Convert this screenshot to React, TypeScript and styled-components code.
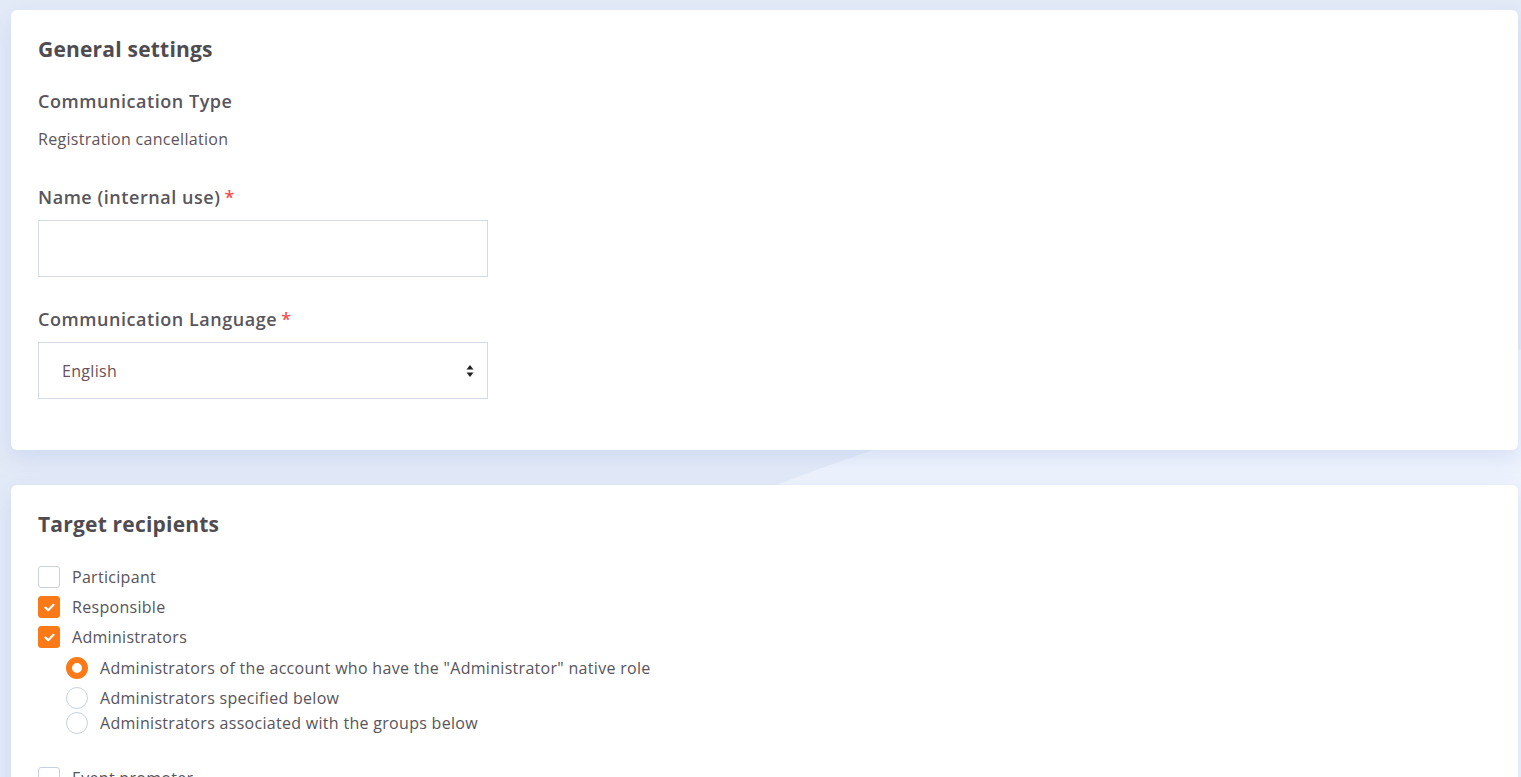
import React, { FC } from 'react';
import styled, { createGlobalStyle } from 'styled-components';

const GlobalStyle = createGlobalStyle`
  * {
    margin: 0;
    box-sizing: border-box;
  }
  body {
    font-family: "Open Sans", Lato, sans-serif;
    letter-spacing: 0.3px;
    background-color: #e3eaf7;
    background-image: radial-gradient(circle at 1500px 2350px, #eef3fd 0, #eef3fd 2000px, #e3eaf7 2001px);
    min-height: 100vh;
  }
`;

const Page = styled.div`
  padding: 10px 3px 0 11px;
  display: flex;
  flex-direction: column;
  gap: 35px;
`;

const Card = styled.section`
  background: #fff;
  border-radius: 6px;
  padding: 26px 27px 51px;
  box-shadow: 0 8px 22px rgba(150, 175, 225, 0.28);
`;

const CardTitle = styled.h2`
  font-size: 21px;
  line-height: 26px;
  font-weight: 700;
  letter-spacing: 0.2px;
  color: #4f4c51;
`;

const Label = styled.div<{ $gap: number }>`
  margin-top: ${(p) => p.$gap}px;
  font-size: 18px;
  line-height: 24px;
  font-weight: 600;
  letter-spacing: 0.55px;
  color: #58555b;
`;

const Required = styled.span`
  color: #f0524f;
  margin-left: 4px;
`;

const Value = styled.div`
  margin-top: 16px;
  font-size: 16px;
  line-height: 20px;
  color: #5e5359;
`;

const Field = styled.div`
  margin-top: 11px;
  width: 450px;
  height: 57px;
  border: 1px solid #d3dbe7;
  display: flex;
  align-items: center;
  justify-content: space-between;
  padding: 0 13px 0 23px;
  font-size: 16px;
  color: #6b4f5a;
`;

const CheckList = styled.div`
  margin-top: 29px;
  display: flex;
  flex-direction: column;
`;

const Row = styled.label<{ $indent?: boolean; $h: number }>`
  display: flex;
  align-items: flex-start;
  gap: 12px;
  height: ${(p) => p.$h}px;
  padding-left: ${(p) => (p.$indent ? 28 : 0)}px;
  font-size: 16px;
  line-height: 22px;
  color: #57545a;
`;

const Box = styled.span<{ $on?: boolean }>`
  width: 22px;
  height: 22px;
  flex: none;
  border-radius: 3px;
  border: 1px solid ${(p) => (p.$on ? '#fb7a17' : '#c9d1dd')};
  background: ${(p) => (p.$on ? '#fb7a17' : '#fff')};
  display: flex;
  align-items: center;
  justify-content: center;
`;

const Radio = styled.span<{ $on?: boolean }>`
  width: 22px;
  height: 22px;
  flex: none;
  border-radius: 50%;
  border: ${(p) => (p.$on ? '6px solid #fb7a17' : '1px solid #c9d1dd')};
  background: #fff;
`;

const Check = () => (
  <svg width="11" height="9" viewBox="0 0 11 9">
    <path d="M1.5 4.6 L4.2 7.2 L9.5 1.8" fill="none" stroke="#fff" strokeWidth="2.2" strokeLinecap="round" strokeLinejoin="round" />
  </svg>
);

const SortArrows = () => (
  <svg width="8" height="14" viewBox="0 0 8 14">
    <path d="M4 1 L7.5 5.5 H0.5 Z" fill="#222" />
    <path d="M4 13 L7.5 8.5 H0.5 Z" fill="#222" />
  </svg>
);

const recipients = [
  { label: 'Participant', on: false },
  { label: 'Responsible', on: true },
  { label: 'Administrators', on: true },
];

const adminModes = [
  { label: 'Administrators of the account who have the "Administrator" native role', on: true, h: 30 },
  { label: 'Administrators specified below', on: false, h: 25 },
  { label: 'Administrators associated with the groups below', on: false, h: 55 },
];

const App: FC = () => (
  <>
    <GlobalStyle />
    <Page>
      <Card>
        <CardTitle>General settings</CardTitle>
        <Label $gap={27}>Communication Type</Label>
        <Value>Registration cancellation</Value>
        <Label $gap={36}>
          Name (internal use)<Required>*</Required>
        </Label>
        <Field />
        <Label $gap={30}>
          Communication Language<Required>*</Required>
        </Label>
        <Field>
          <span>English</span>
          <SortArrows />
        </Field>
      </Card>
      <Card>
        <CardTitle>Target recipients</CardTitle>
        <CheckList>
          {recipients.map((r) => (
            <Row key={r.label} $h={r.label === 'Administrators' ? 31 : 30}>
              <Box $on={r.on}>{r.on && <Check />}</Box>
              {r.label}
            </Row>
          ))}
          {adminModes.map((m) => (
            <Row key={m.label} $indent $h={m.h}>
              <Radio $on={m.on} />
              {m.label}
            </Row>
          ))}
          <Row $h={30}>
            <Box />
            Event promoter
          </Row>
        </CheckList>
      </Card>
    </Page>
  </>
);

export default App;
